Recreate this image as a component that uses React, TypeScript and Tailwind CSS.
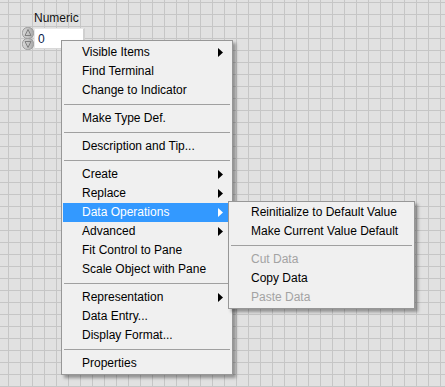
import React from 'react';

type Item =
  | { kind: 'item'; label: string; sub?: boolean; active?: boolean; disabled?: boolean }
  | { kind: 'sep' };

const mainItems: Item[] = [
  { kind: 'item', label: 'Visible Items', sub: true },
  { kind: 'item', label: 'Find Terminal' },
  { kind: 'item', label: 'Change to Indicator' },
  { kind: 'sep' },
  { kind: 'item', label: 'Make Type Def.' },
  { kind: 'sep' },
  { kind: 'item', label: 'Description and Tip...' },
  { kind: 'sep' },
  { kind: 'item', label: 'Create', sub: true },
  { kind: 'item', label: 'Replace', sub: true },
  { kind: 'item', label: 'Data Operations', sub: true, active: true },
  { kind: 'item', label: 'Advanced', sub: true },
  { kind: 'item', label: 'Fit Control to Pane' },
  { kind: 'item', label: 'Scale Object with Pane' },
  { kind: 'sep' },
  { kind: 'item', label: 'Representation', sub: true },
  { kind: 'item', label: 'Data Entry...' },
  { kind: 'item', label: 'Display Format...' },
  { kind: 'sep' },
  { kind: 'item', label: 'Properties' },
];

const subItems: Item[] = [
  { kind: 'item', label: 'Reinitialize to Default Value' },
  { kind: 'item', label: 'Make Current Value Default' },
  { kind: 'sep' },
  { kind: 'item', label: 'Cut Data', disabled: true },
  { kind: 'item', label: 'Copy Data' },
  { kind: 'item', label: 'Paste Data', disabled: true },
];

function Arrow({ white }: { white?: boolean }) {
  return (
    <svg width="5" height="9" viewBox="0 0 5 9" className="absolute right-[8px] top-[5px]">
      <path d="M0 0 L5 4.5 L0 9 Z" fill={white ? '#ffffff' : '#000000'} />
    </svg>
  );
}

function MenuList({ items, indent }: { items: Item[]; indent: string }) {
  return (
    <>
      {items.map((it, i) =>
        it.kind === 'sep' ? (
          <div key={i} className="h-[9px] flex items-center px-[1px]">
            <div className="h-px w-full bg-[#a0a0a0]" />
          </div>
        ) : (
          <div
            key={i}
            className={`relative h-[19px] leading-[19px] whitespace-nowrap ${indent} ${
              it.active ? 'bg-[#3399ff] text-white' : it.disabled ? 'text-[#a3a3a3]' : 'text-black'
            }`}
          >
            {it.label}
            {it.sub && <Arrow white={it.active} />}
          </div>
        )
      )}
    </>
  );
}

function Spinner() {
  return (
    <svg width="12" height="23" viewBox="0 0 12 23" className="block">
      <defs>
        <linearGradient id="sg" x1="0" x2="1" y1="0" y2="0">
          <stop offset="0" stopColor="#d8d8d8" />
          <stop offset="0.5" stopColor="#c4c4c4" />
          <stop offset="1" stopColor="#a8a8a8" />
        </linearGradient>
      </defs>
      <rect x="0.5" y="0.5" width="11" height="11" rx="5" fill="url(#sg)" stroke="#9a9a9a" />
      <rect x="0.5" y="11.5" width="11" height="11" rx="5" fill="url(#sg)" stroke="#9a9a9a" />
      <path d="M6 2.5 L9 8.5 L3 8.5 Z" fill="none" stroke="#808080" />
      <path d="M6 20.5 L9 14.5 L3 14.5 Z" fill="none" stroke="#808080" />
    </svg>
  );
}

export default function App() {
  return (
    <div
      className="relative w-[445px] h-[387px] overflow-hidden bg-[#e1e1e1] [background-image:linear-gradient(to_right,#c6c6c6_1px,transparent_1px),linear-gradient(to_bottom,#c6c6c6_1px,transparent_1px)] [background-size:12px_12px] [background-position:8px_2px] text-[12px]"
      style={{ fontFamily: '"Liberation Sans", Arial, sans-serif' }}
    >
      <div className="pl-[22px] pt-[11px]">
        <div className="pl-[12px] h-[15px] leading-[15px] text-[#111]">Numeric</div>
        <div className="flex items-start mt-[1px]">
          <Spinner />
          <div className="ml-[0px] mt-[1px] w-[51px] h-[21px] bg-white border-t border-l border-[#e8e8e8] border-r-2 border-r-[#d0d0d0] border-b border-b-[#d8d8d8] pl-[3px] leading-[20px] text-[#0a1a4a]">
            0
          </div>
        </div>
      </div>

      <div className="absolute left-[61px] top-[40px] w-[172px] bg-[#f0f0f0] border border-[#979797] pt-[2px] pb-[1px] px-[1px] shadow-[3px_3px_3px_rgba(0,0,0,0.35)]">
        <MenuList items={mainItems} indent="pl-[19px]" />
      </div>

      <div className="absolute left-[228px] top-[201px] w-[187px] bg-[#f0f0f0] border border-[#979797] py-[1px] px-[1px] shadow-[3px_3px_3px_rgba(0,0,0,0.35)]">
        <MenuList items={subItems} indent="pl-[21px]" />
      </div>
    </div>
  );
}
